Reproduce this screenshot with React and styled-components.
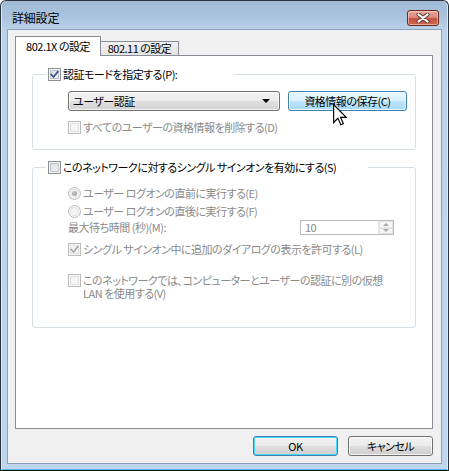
import React from 'react';
import styled, { createGlobalStyle, css } from 'styled-components';

const Global = createGlobalStyle`
  html, body { margin: 0; padding: 0; background: #ffffff; }
  body {
    font-family: "Noto Sans CJK JP", "Noto Sans", "Liberation Sans", sans-serif;
    font-size: 11px;
    color: #000;
  }
  * { box-sizing: border-box; }
`;

const uiText = css`
  font-size: 11px;
  letter-spacing: -0.5px;
  line-height: 13px;
  white-space: nowrap;
`;

const Window = styled.div`
  position: relative;
  width: 449px;
  height: 471px;
  border: 1px solid #2b3540;
  border-bottom-color: #111;
  border-radius: 6px 6px 0 0;
  background: linear-gradient(to bottom, #9fb9d5 0px, #adc5df 18px, #bcd3eb 30px, #bfd6ee 100%);
  box-shadow: inset 1px 0 0 #dbe8f5, inset -1px 0 0 #dbe8f5, inset 0 -1px 0 #59b6de;
  padding: 0 6px 6px 6px;
  display: flex;
  flex-direction: column;
  font-feature-settings: "palt";
`;

const TitleBar = styled.div`
  height: 28px;
  display: flex;
  align-items: flex-start;
  padding-left: 5px;
`;

const Title = styled.span`
  margin-top: 10px;
  font-size: 12px;
  line-height: 14px;
  color: #000;
  letter-spacing: -0.2px;
`;

const CloseButton = styled.div`
  margin-left: auto;
  margin-right: 3px;
  margin-top: 9px;
  width: 32px;
  height: 16px;
  border: 1px solid #6e2a22;
  border-radius: 3px;
  background: linear-gradient(to bottom, #e9a99c 0%, #d98a7c 45%, #c4503c 55%, #cf6a52 100%);
  box-shadow: inset 0 0 0 1px rgba(255, 220, 210, 0.55);
  display: flex;
  align-items: center;
  justify-content: center;
`;

const Client = styled.div`
  flex: 1;
  display: flex;
  flex-direction: column;
  background: #f0f0f0;
  border: 1px solid #8ba1b9;
  padding: 6px 8px 7px 7px;
`;

const TabRow = styled.div`
  height: 20px;
  margin-bottom: -1px;
  display: flex;
  align-items: flex-end;
  position: relative;
  z-index: 1;
`;

const Tab = styled.div`
  ${uiText}
  height: ${p => (p.$active ? 20 : 14)}px;
  margin-bottom: ${p => (p.$active ? 0 : 1)}px;
  width: ${p => p.$w}px;
  border: 1px solid #898c95;
  border-bottom: none;
  border-left: ${p => (p.$active ? '1px solid #898c95' : 'none')};
  background: ${p => (p.$active ? '#ffffff' : 'linear-gradient(to bottom, #f2f2f2, #e3e3e3)')};
  display: flex;
  align-items: center;
  justify-content: center;
  padding-bottom: ${p => (p.$active ? 1 : 0)}px;
`;

const Panel = styled.div`
  height: 374px;
  border: 1px solid #898c95;
  background: #ffffff;
  padding: 12px 16px 0 16px;
  display: flex;
  flex-direction: column;
`;

const Group = styled.fieldset`
  margin: ${p => p.$mt}px 0 0 0;
  min-width: 0;
  border: 1px solid #d5dfe5;
  border-radius: 3px;
  padding: 0 8px ${p => p.$pb}px 13px;
`;

const Legend = styled.legend`
  padding: 0 0 0 2px;
  width: ${p => p.$w}px;
  height: 13px;
`;

const LegendInner = styled.span`
  display: flex;
  align-items: center;
  gap: 2px;
  height: 13px;
`;

const GroupBody = styled.div`
  padding: ${p => p.$pt}px 0 0 22px;
  display: flex;
  flex-direction: column;
`;

const Row = styled.div`
  display: flex;
  align-items: ${p => (p.$top ? 'flex-start' : 'center')};
  gap: ${p => p.$gap ?? 2}px;
  margin-top: ${p => p.$mt ?? 0}px;
  min-height: 13px;
`;

const Label = styled.span`
  ${uiText}
  line-height: ${p => p.$lh ?? 13}px;
  color: ${p => (p.$disabled ? '#8a8a8a' : '#000')};
  width: ${p => (p.$w ? `${p.$w}px` : 'auto')};
  flex: none;
`;

const Box = styled.span`
  flex: none;
  width: 13px;
  height: 13px;
  border: 1px solid ${p => (p.$disabled ? '#bcbcbc' : '#8e8f8f')};
  background: ${p => (p.$disabled ? '#f4f4f4' : 'linear-gradient(135deg, #d7dbe0 0%, #f7f7f7 100%)')};
  box-shadow: ${p => (p.$disabled ? 'inset 0 0 0 1px #f7f7f7, inset 0 0 0 2px #e2e2e2' : 'inset 0 0 0 1px #f4f4f4, inset 0 0 0 2px #bfc4ca')};
  display: inline-flex;
  align-items: center;
  justify-content: center;
`;

const RadioCircle = styled.span`
  flex: none;
  width: 13px;
  height: 13px;
  border-radius: 50%;
  border: 1px solid #bcbcbc;
  background: #f4f4f4;
  box-shadow: inset 0 0 0 1px #fbfbfb, inset 0 0 0 2px #e3e3e3;
  display: inline-flex;
  align-items: center;
  justify-content: center;
`;

const RadioDot = styled.span`
  width: 5px;
  height: 5px;
  border-radius: 50%;
  background: radial-gradient(circle at 40% 40%, #c4c4c4, #9a9a9a);
`;

const Select = styled.div`
  ${uiText}
  width: 215px;
  height: 20px;
  border: 1px solid #707070;
  border-radius: 3px;
  background: linear-gradient(to bottom, #f3f3f3 0%, #ececec 50%, #dfdfdf 50%, #d3d3d3 100%);
  box-shadow: inset 0 0 0 1px rgba(255, 255, 255, 0.7);
  display: flex;
  align-items: center;
  padding-left: 4px;
`;

const SelectArrow = styled.span`
  margin-left: auto;
  margin-right: 9px;
  width: 0;
  height: 0;
  border-left: 4px solid transparent;
  border-right: 4px solid transparent;
  border-top: 4px solid #000;
`;

const PushButton = styled.div`
  ${uiText}
  width: ${p => p.$w}px;
  height: 20px;
  border: 1px solid ${p => (p.$hover || p.$default ? '#3c7fb1' : '#707070')};
  border-radius: 3px;
  background: ${p =>
    p.$hover
      ? 'linear-gradient(to bottom, #eaf6fd 0%, #d9f0fc 50%, #bee6fd 50%, #a7d9f5 100%)'
      : 'linear-gradient(to bottom, #f2f2f2 0%, #ebebeb 50%, #dddddd 50%, #cfcfcf 100%)'};
  box-shadow: ${p => (p.$default ? 'inset 0 0 0 1px #48d7fb' : 'inset 0 0 0 1px rgba(255,255,255,0.75)')};
  display: flex;
  align-items: center;
  justify-content: center;
`;

const ButtonRow = styled.div`
  margin-top: 7px;
  display: flex;
  justify-content: flex-end;
  gap: 10px;
`;

const Spin = styled.div`
  width: 94px;
  height: 15px;
  border: 1px solid #b9bcbf;
  background: #ffffff;
  display: flex;
  align-items: stretch;
`;

const SpinText = styled.span`
  ${uiText}
  flex: 1;
  padding-left: 4px;
  color: #8a8a8a;
`;

const SpinButtons = styled.div`
  width: 15px;
  display: flex;
  flex-direction: column;
  border-left: 1px solid #e6e6e6;
`;

const SpinBtn = styled.div`
  flex: 1;
  border: 1px solid #e3e3e3;
  background: #f7f7f7;
  display: flex;
  align-items: center;
  justify-content: center;
`;

const SpinArrow = styled.span`
  width: 0;
  height: 0;
  border-left: 3px solid transparent;
  border-right: 3px solid transparent;
  ${p => (p.$up ? 'border-bottom: 3px solid #a9a9a9;' : 'border-top: 3px solid #a9a9a9;')}
`;

const Cursor = styled.svg`
  position: absolute;
  left: 332px;
  top: 103px;
  pointer-events: none;
`;

const Check = ({ checked, disabled }) => (
  <Box $disabled={disabled}>
    {checked && (
      <svg width="9" height="9" viewBox="0 0 9 9">
        <path
          d="M1.2 4.6 L3.5 7 L7.8 1.6"
          fill="none"
          stroke={disabled ? '#a8a8a8' : '#3a4f8e'}
          strokeWidth="1.7"
          strokeLinecap="square"
        />
      </svg>
    )}
  </Box>
);

const Radio = ({ checked }) => <RadioCircle>{checked && <RadioDot />}</RadioCircle>;

export default function App() {
  return (
    <>
      <Global />
      <Window>
        <TitleBar>
          <Title>詳細設定</Title>
          <CloseButton>
            <svg width="14" height="10" viewBox="0 0 14 10">
              <path d="M2.5 1.5 L11.5 8.5 M11.5 1.5 L2.5 8.5" stroke="#5a3a36" strokeWidth="4" strokeLinecap="round" />
              <path d="M2.5 1.5 L11.5 8.5 M11.5 1.5 L2.5 8.5" stroke="#ffffff" strokeWidth="2.2" strokeLinecap="round" />
            </svg>
          </CloseButton>
        </TitleBar>
        <Client>
          <TabRow>
            <Tab $active $w={86}>802.1X の設定</Tab>
            <Tab $w={78}>802.11 の設定</Tab>
          </TabRow>
          <Panel>
            <Group $mt={0} $pb={15}>
              <Legend $w={189}>
                <LegendInner>
                  <Check checked />
                  <Label>認証モードを指定する(P):</Label>
                </LegendInner>
              </Legend>
              <GroupBody $pt={10}>
                <Row $gap={8}>
                  <Select>
                    ユーザー認証
                    <SelectArrow />
                  </Select>
                  <PushButton $w={121} $hover>資格情報の保存(C)</PushButton>
                </Row>
                <Row $mt={10}>
                  <Check disabled />
                  <Label $disabled>すべてのユーザーの資格情報を削除する(D)</Label>
                </Row>
              </GroupBody>
            </Group>

            <Group $mt={11} $pb={27}>
              <Legend $w={322}>
                <LegendInner>
                  <Check />
                  <Label>このネットワークに対するシングル サインオンを有効にする(S)</Label>
                </LegendInner>
              </Legend>
              <GroupBody $pt={13}>
                <Row>
                  <Radio checked />
                  <Label $disabled>ユーザー ログオンの直前に実行する(E)</Label>
                </Row>
                <Row $mt={5}>
                  <Radio />
                  <Label $disabled>ユーザー ログオンの直後に実行する(F)</Label>
                </Row>
                <Row $mt={2} $gap={0}>
                  <Label $disabled $w={232}>最大待ち時間 (秒)(M):</Label>
                  <Spin>
                    <SpinText>10</SpinText>
                    <SpinButtons>
                      <SpinBtn><SpinArrow $up /></SpinBtn>
                      <SpinBtn><SpinArrow /></SpinBtn>
                    </SpinButtons>
                  </Spin>
                </Row>
                <Row $mt={8}>
                  <Check checked disabled />
                  <Label $disabled>シングル サインオン中に追加のダイアログの表示を許可する(L)</Label>
                </Row>
                <Row $mt={18} $top>
                  <Check disabled />
                  <Label $disabled $lh={13}>
                    このネットワークでは、コンピューターとユーザーの認証に別の仮想
                    <br />
                    LAN を使用する(V)
                  </Label>
                </Row>
              </GroupBody>
            </Group>
          </Panel>
          <ButtonRow>
            <PushButton $w={85} $default>OK</PushButton>
            <PushButton $w={85}>キャンセル</PushButton>
          </ButtonRow>
        </Client>
        <Cursor width="14" height="22" viewBox="0 0 12 19">
          <path
            d="M0.5 0.5 L0.5 16 L4.2 12.4 L6.7 18 L8.9 17 L6.5 11.5 L11.3 11.5 Z"
            fill="#ffffff"
            stroke="#000000"
            strokeWidth="1"
            strokeLinejoin="miter"
          />
        </Cursor>
      </Window>
    </>
  );
}
